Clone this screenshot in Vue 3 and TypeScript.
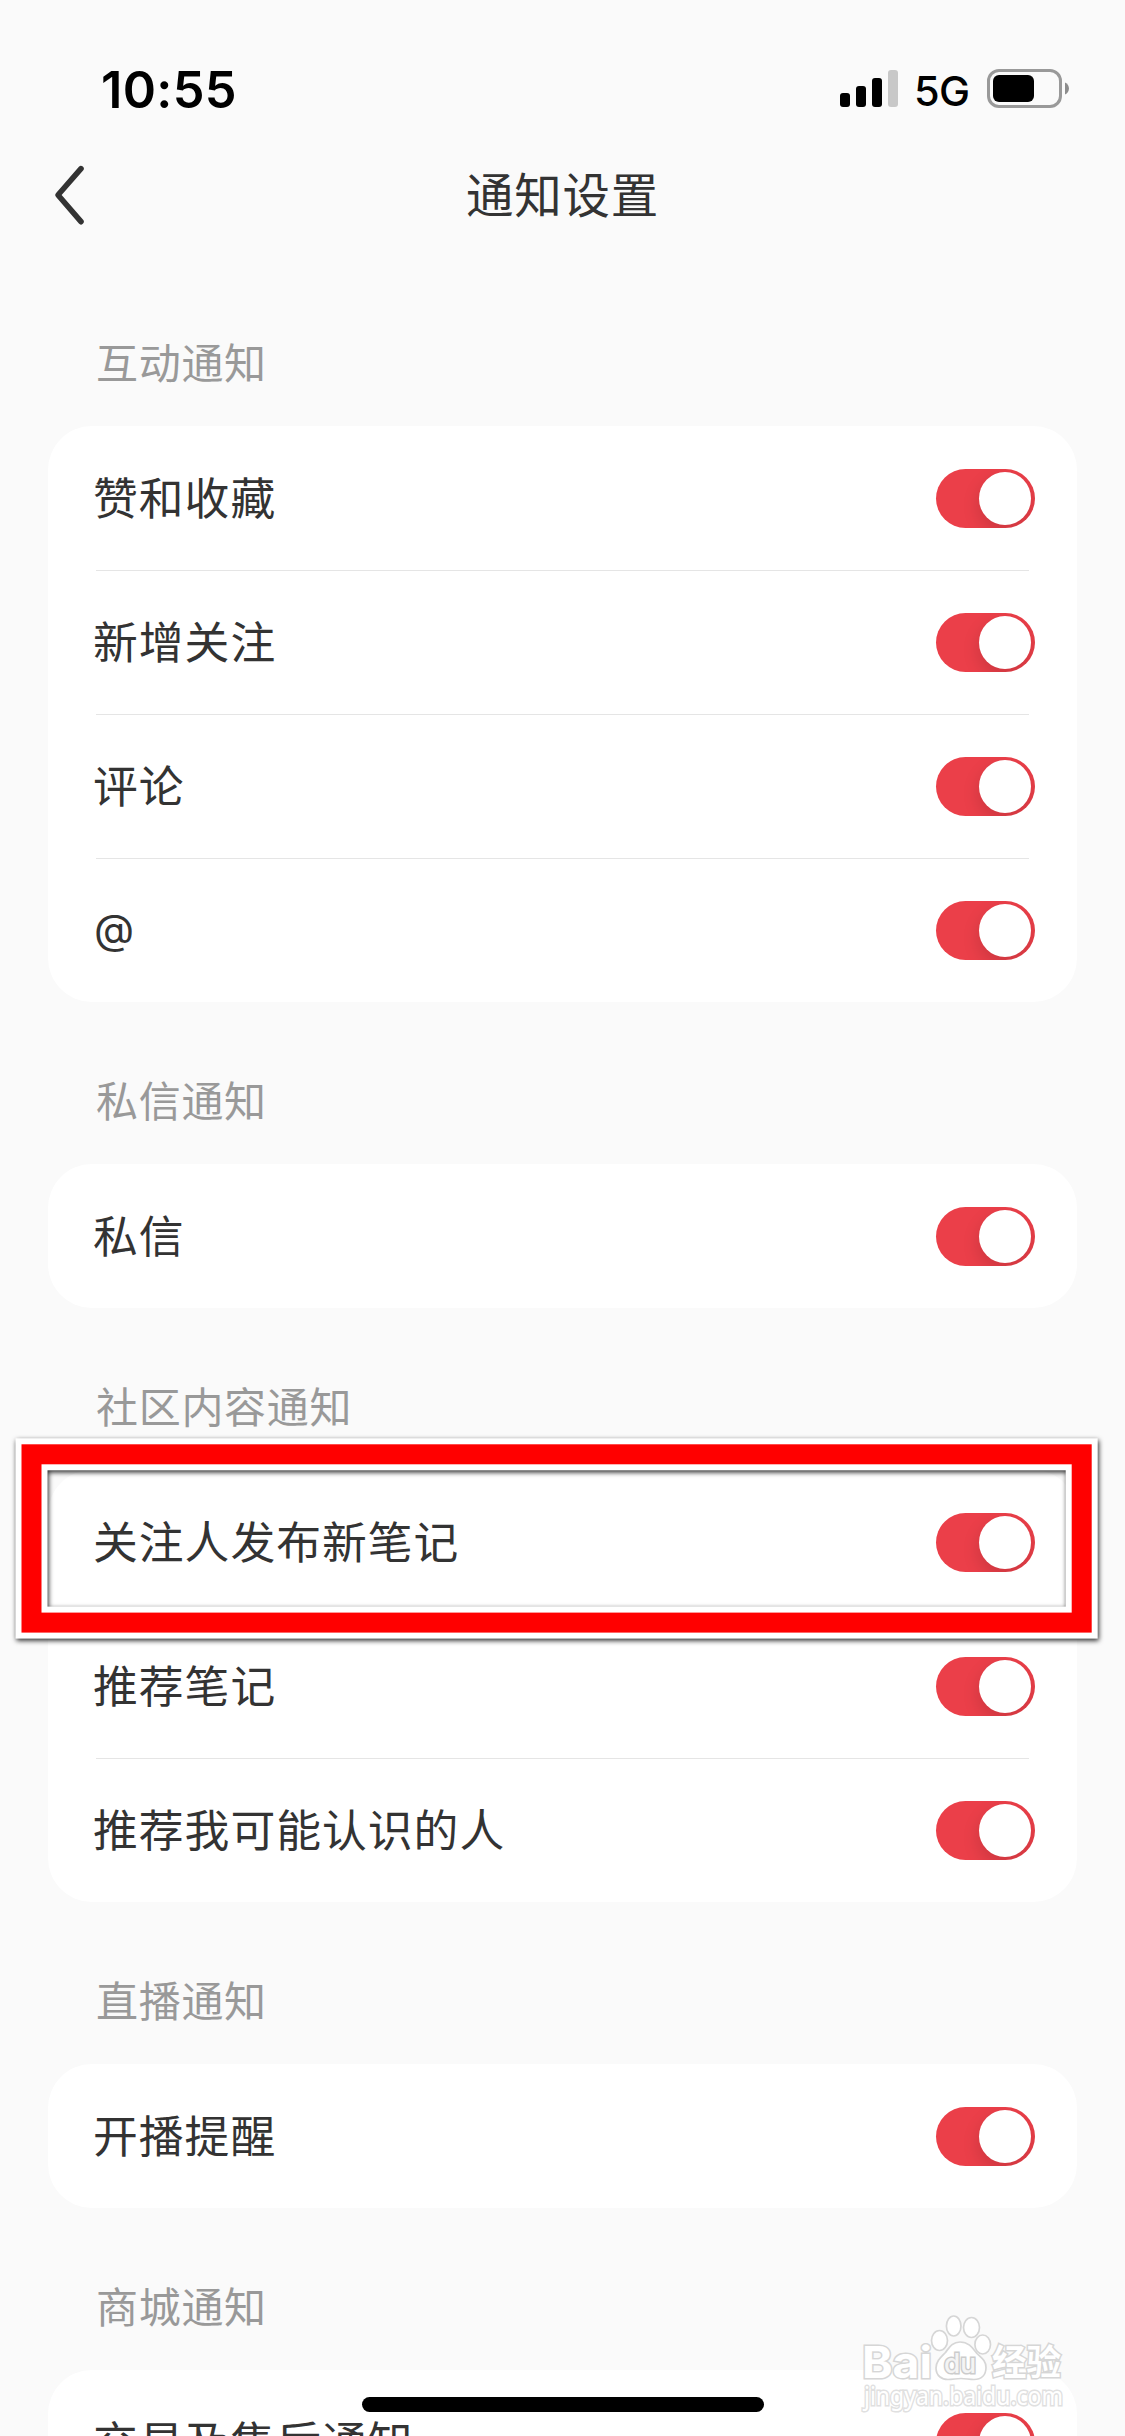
<script setup lang="ts">
interface Section {
  title: string
  items: string[]
}

const sections: Section[] = [
  { title: '互动通知', items: ['赞和收藏', '新增关注', '评论', '@'] },
  { title: '私信通知', items: ['私信'] },
  { title: '社区内容通知', items: ['关注人发布新笔记', '推荐笔记', '推荐我可能认识的人'] },
  { title: '直播通知', items: ['开播提醒'] },
  { title: '商城通知', items: ['交易及售后通知'] },
]
</script>

<template>
  <div class="screen">
    <header class="status">
      <span class="time">10:55</span>
      <div class="indicators">
        <svg class="signal" width="58" height="38" viewBox="0 0 58 38">
          <rect x="0" y="23" width="10" height="14" rx="3" />
          <rect x="16" y="16" width="10" height="21" rx="3" />
          <rect x="32" y="8" width="10" height="29" rx="3" />
          <rect x="48" y="0" width="10" height="37" rx="3" fill="#c8c8c8" />
        </svg>
        <span class="network">5G</span>
        <svg class="battery" width="83" height="39" viewBox="0 0 83 39">
          <rect x="1.5" y="1.5" width="72" height="36" rx="10.5" fill="none" stroke="#999" stroke-width="3" />
          <rect x="6" y="6" width="41" height="27" rx="6" />
          <path d="M78 13.5c5.300 2 5.300 10 0 12z" fill="#8c8c8c" />
        </svg>
      </div>
    </header>

    <nav class="navbar">
      <svg class="back" width="36" height="66" viewBox="0 0 36 66">
        <path d="M31 6.700 8 33 31 59.700" fill="none" stroke="#333" stroke-width="5.600" stroke-linecap="round" stroke-linejoin="round" />
      </svg>
      <h1>通知设置</h1>
    </nav>

    <main>
      <section v-for="section in sections" :key="section.title">
        <h2>{{ section.title }}</h2>
        <ul class="card">
          <li v-for="item in section.items" :key="item">
            <span class="label" :class="{ latin: item === '@' }">{{ item }}</span>
            <span class="toggle"><i class="knob"></i></span>
          </li>
        </ul>
      </section>
    </main>

    <svg class="highlight" width="1125" height="240" viewBox="0 1420 1125 240">
      <rect x="31.500" y="1454.300" width="1050.200" height="168.300" fill="none" stroke="#fff" stroke-width="32" />
      <rect x="31.500" y="1454.300" width="1050.200" height="168.300" fill="none" stroke="#f00" stroke-width="20" />
    </svg>

    <svg class="watermark" width="230" height="110" viewBox="850 2305 230 110">
      <g fill="#fff" stroke="#d6d6d6" stroke-width="1.700">
        <ellipse cx="939.500" cy="2340.500" rx="8" ry="10" />
        <ellipse cx="953.700" cy="2326" rx="7.300" ry="10" />
        <ellipse cx="971.500" cy="2327.500" rx="8" ry="10" />
        <ellipse cx="982.700" cy="2344.500" rx="7.800" ry="9.500" />
        <path d="M960 2342c-8 0-11 6-15 11-4 4-9 8-9 15 0 8 6 11.500 12 11.500 5 0 8-1 13-1s8 1 13 1c7 0 12-4 12-12 0-7-5-10-9-14-4-5-8-11.500-17-11.500z" />
      </g>
      <g class="brand" paint-order="stroke">
        <text x="862" y="2378" font-size="44" textLength="70" lengthAdjust="spacingAndGlyphs">Bai</text>
        <text class="du" x="944" y="2373" font-size="27" textLength="32" lengthAdjust="spacingAndGlyphs">du</text>
        <text class="cjk" x="992" y="2375" font-size="35" textLength="69" lengthAdjust="spacingAndGlyphs">经验</text>
        <text class="url" x="864" y="2405" font-size="25" textLength="199" lengthAdjust="spacingAndGlyphs">jingyan.baidu.com</text>
      </g>
    </svg>

    <div class="home-indicator"></div>
  </div>
</template>

<style>
body {
  background: #fafafa;
}
</style>

<style scoped>
.screen {
  position: relative;
  width: 1125px;
  height: 2436px;
  overflow: hidden;
  background: #fafafa;
  color: #333;
  font-family: 'Noto Sans CJK SC', sans-serif;
}

.status {
  display: flex;
  justify-content: space-between;
  box-sizing: border-box;
  height: 132px;
  padding: 59px 55px 0 101px;
  color: #000;
  font-family: Inter, sans-serif;
}

.time {
  font-size: 50.500px;
  font-weight: 600;
  line-height: 61px;
  letter-spacing: 0.300px;
}

.indicators {
  display: flex;
  align-items: flex-start;
}

.signal {
  margin-top: 11px;
}

.network {
  width: 89px;
  box-sizing: border-box;
  padding-left: 16px;
  font-size: 41.500px;
  font-weight: 500;
  line-height: 64px;
  letter-spacing: -0.600px;
}

.battery {
  margin-top: 10px;
}

.navbar {
  display: grid;
  grid-template-columns: 140px 1fr 140px;
  align-items: center;
  height: 126px;
}

.back {
  margin-left: 50px;
}

h1 {
  margin: 0;
  padding-bottom: 4px;
  text-align: center;
  font-size: 47.500px;
  font-weight: 400;
  line-height: 70px;
  letter-spacing: 0.800px;
}

main {
  padding: 6px 48px 0;
}

h2 {
  display: flex;
  align-items: center;
  box-sizing: border-box;
  height: 162px;
  margin: 0;
  padding: 32px 0 0 48px;
  color: #999;
  font-size: 42px;
  font-weight: 400;
  line-height: 60px;
  letter-spacing: 0.700px;
}

.card {
  margin: 0;
  padding: 0;
  overflow: hidden;
  border-radius: 44px;
  background: #fff;
  list-style: none;
}

li {
  display: flex;
  align-items: center;
  justify-content: space-between;
  height: 144px;
  padding: 0 42px 0 45px;
}

li + li {
  background: linear-gradient(#e5e5e5, #e5e5e5) 48px 0 / 933px 1px no-repeat;
}

.label {
  padding-bottom: 4px;
  font-size: 44.800px;
  line-height: 66px;
  letter-spacing: 1px;
}

.label.latin {
  padding: 0 0 3px 1px;
  font-family: Inter, sans-serif;
  font-size: 41.500px;
}

.toggle {
  display: flex;
  align-items: center;
  justify-content: flex-end;
  box-sizing: border-box;
  width: 99px;
  height: 59px;
  margin-top: 1px;
  padding-right: 4px;
  overflow: hidden;
  border-radius: 30px;
  background: #eb3f49;
}

.knob {
  width: 52px;
  height: 53px;
  border-radius: 50%;
  background: #fff;
  box-shadow: 0 7px 18px rgba(0, 0, 0, 0.14);
}

.highlight {
  position: absolute;
  top: 1420px;
  left: 0;
  filter: drop-shadow(1.500px 2px 2.500px rgba(0, 0, 0, 0.85));
}

.watermark {
  position: absolute;
  top: 2305px;
  left: 850px;
}

.brand {
  fill: #fff;
  stroke: #d6d6d6;
  stroke-width: 3px;
  font-family: Inter, sans-serif;
  font-weight: 700;
}

.brand .du {
  fill: #f4f4f4;
  stroke: #ccc;
  font-weight: 500;
}

.brand .cjk {
  font-family: 'Noto Sans CJK SC', sans-serif;
}

.brand .url {
  stroke: #e0e0e0;
  font-family: 'Noto Sans', sans-serif;
  font-weight: 400;
}

.home-indicator {
  position: absolute;
  top: 2397px;
  left: 362px;
  width: 402px;
  height: 15px;
  border-radius: 8px;
  background: #000;
}
</style>
